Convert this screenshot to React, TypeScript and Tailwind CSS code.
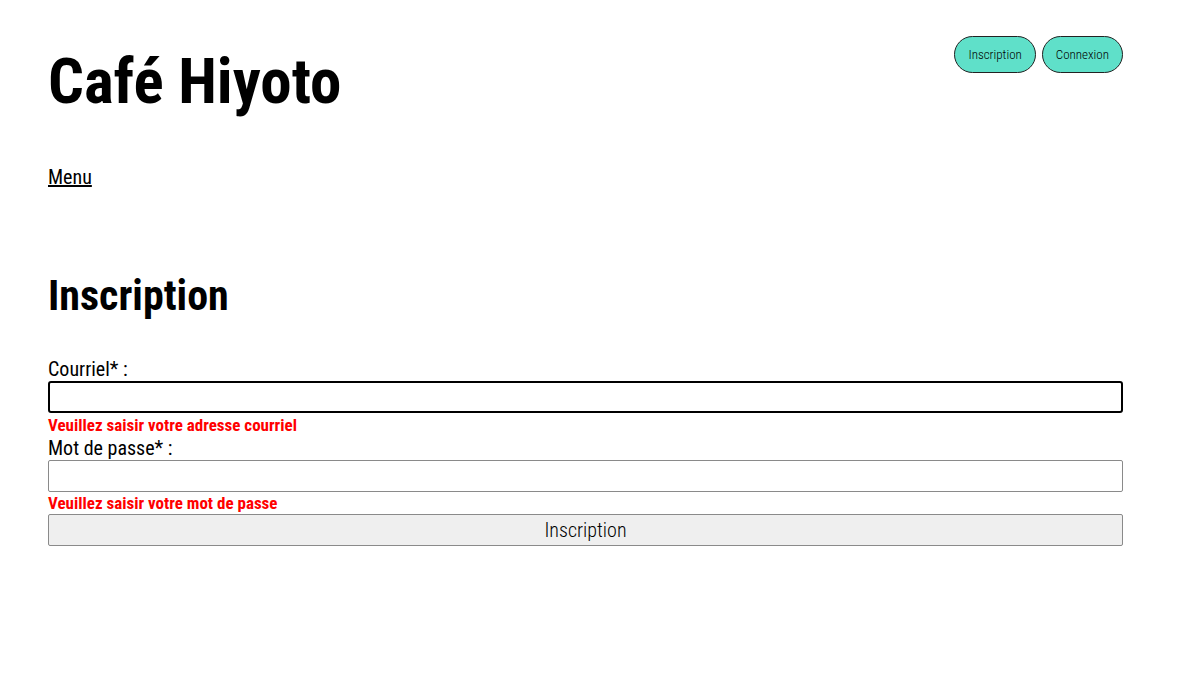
import React from "react"

export default function App() {
  return (
    <div className="min-h-[700px] bg-white text-black font-['Roboto_Condensed','Roboto',sans-serif] pl-[48px] pr-[77px]">
      <header className="flex justify-between items-start pt-[36px]">
        <h1 className="text-[63px] font-bold leading-none mt-[14px]">Café Hiyoto</h1>
        <nav className="flex gap-[6px]">
          <button className="h-[37px] px-[13px] rounded-full border border-[#222] bg-[#5fe0c9] text-[13px] font-light">
            Inscription
          </button>
          <button className="h-[37px] px-[13px] rounded-full border border-[#222] bg-[#5fe0c9] text-[13px] font-light">
            Connexion
          </button>
        </nav>
      </header>

      <a href="#" className="inline-block mt-[49px] text-[20px] underline">
        Menu
      </a>

      <main className="mt-[83px]">
        <h2 className="text-[42px] font-bold leading-none">Inscription</h2>
        <form className="mt-[40px] flex flex-col" onSubmit={(e) => e.preventDefault()}>
          <label className="text-[20px] leading-[24px]">Courriel* :</label>
          <input
            type="email"
            className="h-[32px] border-2 border-black rounded-[3px] outline-none px-2"
          />
          <p className="text-[17px] font-bold text-[#ff0000] leading-[22px] mt-[1px]">
            Veuillez saisir votre adresse courriel
          </p>
          <label className="text-[20px] leading-[24px]">Mot de passe* :</label>
          <input
            type="password"
            className="h-[32px] border border-[#8a8a8a] rounded-[2px] outline-none px-2"
          />
          <p className="text-[17px] font-bold text-[#ff0000] leading-[22px]">
            Veuillez saisir votre mot de passe
          </p>
          <button className="h-[32px] border border-[#8a8a8a] rounded-[2px] bg-[#efefef] text-[20px] font-light">
            Inscription
          </button>
        </form>
      </main>
    </div>
  )
}
